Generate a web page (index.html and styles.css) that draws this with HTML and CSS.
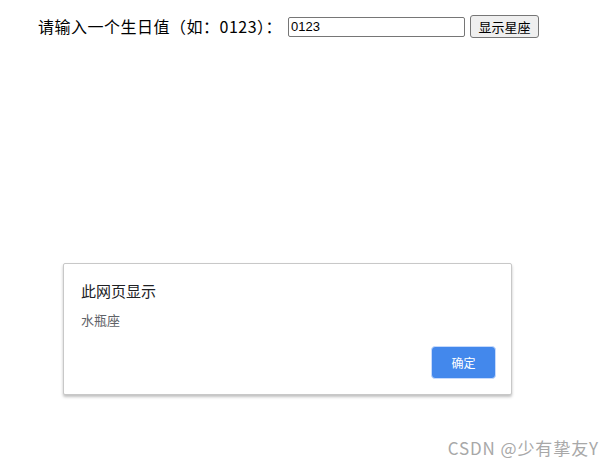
FILE: index.html
```html
<!DOCTYPE html>
<html lang="zh-CN">
<head>
    <meta charset="UTF-8">
    <title>星座查询</title>
    <link rel="stylesheet" href="styles.css">
</head>
<body>
    <div class="form-row">
        <label for="birthday">请输入一个生日值（如：0123）：</label>
        <input type="text" id="birthday" class="birthday-input" value="0123">
        <button class="show-btn">显示星座</button>
    </div>

    <div class="alert-box">
        <div class="alert-title">此网页显示</div>
        <div class="alert-msg">水瓶座</div>
        <div class="alert-actions">
            <button class="alert-ok">确定</button>
        </div>
    </div>

    <div class="watermark">CSDN @少有挚友Y</div>
</body>
</html>
```

FILE: styles.css
```css
body {
    margin: 0;
    padding: 15px 38px;
    font-family: "Microsoft YaHei", "Noto Sans CJK SC", sans-serif;
    background: #ffffff;
    color: #000;
    height: 441px;
    position: relative;
    overflow: hidden;
}
.form-row {
    display: flex;
    align-items: center;
    height: 23px;
}
.form-row label {
    font-size: 16px;
    letter-spacing: 0.5px;
    margin-right: 6px;
    margin-top: -2px;
}
.birthday-input {
    width: 177px;
    height: 20px;
    box-sizing: border-box;
    margin: 0 5px 0 0;
    padding: 1px 2px;
    border: 1px solid #767676;
    border-radius: 2px;
    font-family: "Liberation Sans", Arial, sans-serif;
    font-size: 13px;
}
.show-btn {
    width: 69px;
    height: 23px;
    margin: 0;
    padding: 0;
    border: 1px solid #767676;
    border-radius: 3px;
    background: #efefef;
    font-family: "Microsoft YaHei", "Noto Sans CJK SC", sans-serif;
    font-size: 13px;
    color: #000;
}
.alert-box {
    position: absolute;
    left: 63px;
    top: 263px;
    width: 449px;
    height: 132px;
    box-sizing: border-box;
    padding: 17px 15px 15px 17px;
    background: #fff;
    border: 1px solid #c8c8c8;
    border-radius: 2px;
    box-shadow: 0 2px 3px rgba(0, 0, 0, 0.25);
    display: flex;
    flex-direction: column;
}
.alert-title {
    font-size: 15px;
    color: #202124;
    line-height: 20px;
}
.alert-msg {
    margin-top: 10px;
    font-size: 13px;
    color: #5f6368;
    line-height: 18px;
}
.alert-actions {
    margin-top: auto;
    display: flex;
    justify-content: flex-end;
}
.alert-ok {
    width: 65px;
    height: 33px;
    margin: 0;
    border: 1px solid #c6dafc;
    border-radius: 4px;
    background: #4388ec;
    color: #fff;
    font-family: "Microsoft YaHei", "Noto Sans CJK SC", sans-serif;
    font-size: 12px;
}
.watermark {
    position: absolute;
    right: 17px;
    bottom: 13px;
    font-size: 17px;
    letter-spacing: 0.9px;
    line-height: 20px;
    color: #a8a8a8;
    font-family: "Microsoft YaHei", "Noto Sans CJK SC", sans-serif;
}
```
